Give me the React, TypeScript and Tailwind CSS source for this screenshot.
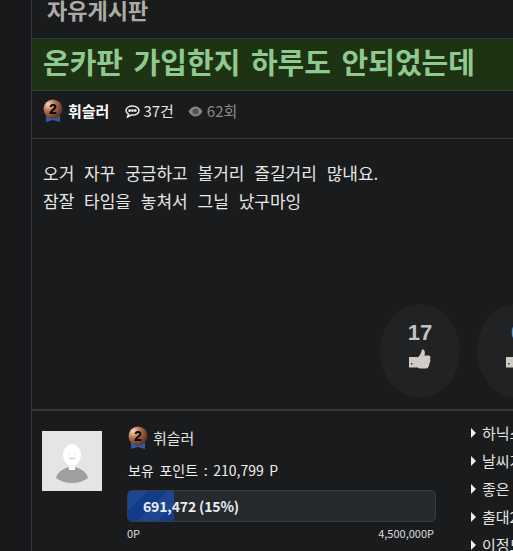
import React from 'react';

const FONT = '"Noto Sans CJK KR", "Liberation Sans", sans-serif';

// bronze rank medal used next to the nickname
const Medal = ({ id }: { id: string }) => (
  <svg width="20" height="24" viewBox="0 0 20 24" className="shrink-0">
    <defs>
      <radialGradient id={id} cx="0.25" cy="0.25" r="0.95">
        <stop offset="0" stopColor="#f6d8c4" />
        <stop offset="0.4" stopColor="#b06c4a" />
        <stop offset="1" stopColor="#3f2015" />
      </radialGradient>
    </defs>
    <path d="M3 16h14v7l-7-2-7 2z" fill="#3658a8" />
    <circle cx="10" cy="10" r="9.500" fill={`url(#${id})`} />
    <text x="10" y="15" textAnchor="middle" fontSize="14" fontWeight="700" fill="#000" fontFamily="Liberation Sans, sans-serif">2</text>
  </svg>
);

const ThumbIcon = () => (
  <svg width="22" height="20" viewBox="0 0 22 20" fill="#d0cbc4">
    <rect x="0" y="8" width="8" height="10.500" />
    <rect x="2" y="14" width="1.500" height="1.500" fill="#333" />
    <path d="M8 8.500c2.500-1 4-4 5-8 2.500-.5 3.500 2 2.500 6h4c2 0 2.500 2 1.500 3.500.5 1.500.5 3-.5 4 0 2-1 5-3 5.500h-5c-2 0-3.500-.5-4.500-1.500z" />
  </svg>
);

const VoteBubble = ({ count, dim }: { count: number; dim?: boolean }) => (
  <div className="flex h-[94px] w-[80px] shrink-0 flex-col items-center rounded-[50%] bg-[#202224] pt-[14px]">
    <span className={`text-[22px] leading-[30px] font-bold ${dim ? 'text-[#6f9fc0]' : 'text-[#c0c4c8]'}`} style={{ fontFamily: '"Liberation Sans", sans-serif' }}>{count}</span>
    <div className="mt-[1px]"><ThumbIcon /></div>
  </div>
);

const SIDE_LINKS = ['하닉스 주가', '날씨가 좋네요', '좋은 아침', '출대2 후기', '이정도면'];

export default function App() {
  return (
    <div className="flex h-[551px] w-[513px] overflow-hidden bg-[#1a1b1d] text-[#e8e8e8]" style={{ fontFamily: FONT }}>
      <div className="w-[32px] shrink-0 border-r border-[#33353a] bg-[#17181a]" />

      <div className="w-[481px] shrink-0 overflow-hidden">
        <div className="h-[38px] pl-[15px] text-[22px] leading-[18px] font-bold text-[#aeaaa4]">자유게시판</div>

        <div className="h-[53px] w-[600px] border-y border-t-[#2b3450] border-b-[#3a3a3a] bg-[#1e3214] pl-[11px] text-[29px] leading-[45px] font-semibold whitespace-nowrap text-[#8fc98f] [word-spacing:4px]">
          온카판 가입한지 하루도 안되었는데
        </div>

        <div className="flex h-[48px] w-[600px] items-center border-b border-[#38393b] pb-[7px] pl-[11px] text-[15px]">
          <Medal id="medal-a" />
          <span className="ml-[5px] font-bold text-white">휘슬러</span>
          <svg width="15" height="13" viewBox="0 0 15 13" className="ml-[16px]" fill="none" stroke="#eee" strokeWidth="1.500">
            <path d="M7.500 1C3.800 1 1 3 1 5.600c0 1.500 1 2.800 2.500 3.600L2.500 12l3.600-2c.5.1.9.1 1.400.1 3.600 0 6.500-2 6.500-4.500S11.100 1 7.500 1z" />
            <circle cx="4.700" cy="5.600" r="0.700" fill="#eee" />
            <circle cx="7.500" cy="5.600" r="0.700" fill="#eee" />
            <circle cx="10.300" cy="5.600" r="0.700" fill="#eee" />
          </svg>
          <span className="ml-[3px] text-[#e4e4e4]">37건</span>
          <svg width="15" height="11" viewBox="0 0 15 11" className="ml-[14px]">
            <path d="M.5 5.500C2.500 2 5 .5 7.500.5s5 1.500 7 5c-2 3.500-4.500 5-7 5s-5-1.500-7-5z" fill="#8a857e" />
            <circle cx="7.500" cy="5.500" r="3" fill="#55524e" />
          </svg>
          <span className="ml-[4px] text-[#8d8a84]">62회</span>
        </div>

        <div className="pt-[20px] pl-[11px] text-[17px] leading-[28px] text-[#e6e6e6] [word-spacing:6px]">
          <p>오거 자꾸 궁금하고 볼거리 즐길거리 많내요.</p>
          <p>잠잘 타임을 놓쳐서 그닐 났구마잉</p>
        </div>

        <div className="mt-[89px] flex gap-[17px] pl-[348px]">
          <VoteBubble count={17} />
          <VoteBubble count={0} dim />
        </div>

        <div className="mt-[11px] flex h-[143px] w-[600px] border-t-2 border-[#36383a] pt-[20px] pl-[10px]">
          <div className="flex h-[60px] w-[60px] shrink-0 items-end justify-center overflow-hidden bg-[#e5e5e5]">
            <svg width="60" height="60" viewBox="0 0 60 60">
              <path d="M14 47c2-7 9-11 16-11s14 4 16 11c-4 3-10 5-16 5s-12-2-16-5z" fill="#a0a0a0" />
              <rect x="27" y="30" width="6" height="9" fill="#fff" />
              <ellipse cx="30" cy="24" rx="9" ry="11" fill="#fff" />
              <path d="M27 27q3 2.500 6 0" fill="none" stroke="#aaa" strokeWidth="0.800" />
              <circle cx="27" cy="23" r="0.600" fill="#aaa" />
              <circle cx="33" cy="23" r="0.600" fill="#aaa" />
            </svg>
          </div>

          <div className="ml-[25px] w-[309px] shrink-0">
            <div className="-mt-[5px] flex h-[24px] items-center pl-[1px] text-[15px] text-[#e2e2e2]">
              <Medal id="medal-b" />
              <span className="ml-[5px]">휘슬러</span>
            </div>
            <div className="mt-[10px] pl-[1px] text-[14px] leading-[20px] text-[#eeeeee] [word-spacing:2.500px]">보유 포인트 : 210,799 P</div>
            <div className="relative mt-[10px] h-[32px] overflow-hidden rounded-[5px] border border-[#3a3d40] bg-[#272a2d]">
              <div className="h-full w-[15%] bg-[#123c8a] bg-[linear-gradient(135deg,rgba(255,255,255,0.05)_25%,transparent_25%,transparent_50%,rgba(255,255,255,0.05)_50%,rgba(255,255,255,0.05)_75%,transparent_75%)] bg-[length:40px_40px]" />
              <span className="absolute top-0 left-[15px] text-[14px] leading-[30px] font-bold tracking-[-0.15px] text-[#e8edf5]">691,472 (15%)</span>
            </div>
            <div className="mt-[3px] flex justify-between pr-[2px] text-[11px] leading-[16px] text-[#dddddd]">
              <span>0P</span>
              <span>4,500,000P</span>
            </div>
          </div>

          <ul className="-mt-[12px] ml-[35px] text-[15px] leading-[28px] text-[#e4e4e4]">
            {SIDE_LINKS.map((link) => (
              <li key={link} className="flex items-center whitespace-nowrap">
                <span className="mr-[6px] h-0 w-0 border-y-[5px] border-l-[5px] border-y-transparent border-l-[#eeeeee]" />
                {link}
              </li>
            ))}
          </ul>
        </div>
      </div>
    </div>
  );
}
